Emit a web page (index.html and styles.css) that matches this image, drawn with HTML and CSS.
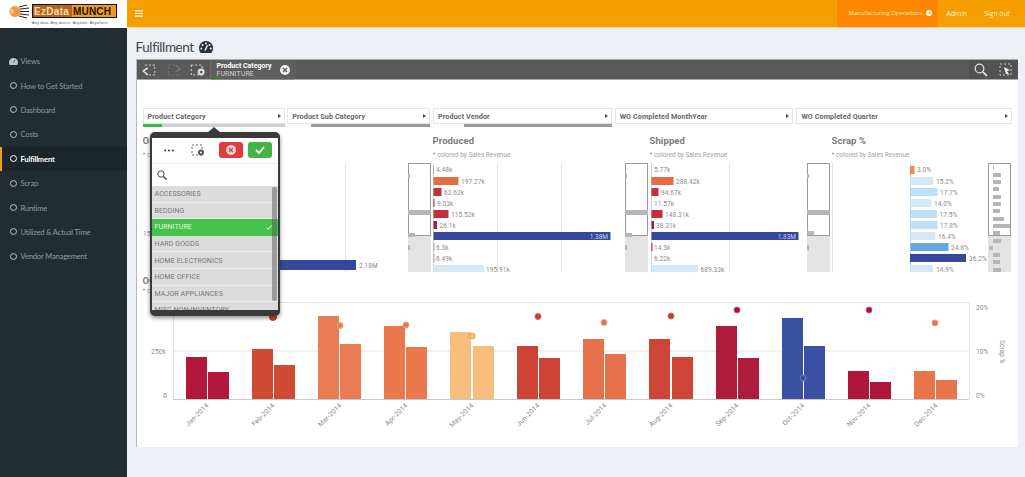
FILE: index.html
```html
<!DOCTYPE html>
<html lang="en">
<head>
<meta charset="utf-8">
<title>Fulfillment</title>
<link rel="stylesheet" href="styles.css">
</head>
<body>
<div class="app">
  <a class="logo" href="#">
    <svg width="127" height="28" viewBox="0 0 127 28">
      <circle cx="15" cy="11.500" r="5.500" fill="#f29a3e"/>
      <circle cx="11.500" cy="11.500" r="2.500" fill="#f7c084"/>
      <g stroke="#222" stroke-width="1"><path d="M19 7 L27 5M20 9 L29 8M20 11.500 L29 11.500M20 14 L29 15M19 16 L27 18"/></g>
      <rect x="32" y="4" width="85" height="14" fill="#1a120a"/>
      <rect x="33" y="5" width="39" height="12" fill="#b5651a"/>
      <rect x="72" y="5" width="44" height="12" fill="#f09a22"/>
      <text class="logo-a" x="34" y="15">EzData</text>
      <text class="logo-b" x="73" y="15">MUNCH</text>
      <text class="logo-c" x="32" y="24">Any data. Any device. Anytime. Anywhere</text>
    </svg>
  </a>
  <header class="topbar">
    <svg class="burger" width="8" height="7" viewBox="0 0 8 7"><path d="M0 0.8H8M0 3.500H8M0 6.200H8" stroke="#fff" stroke-width="1.200"/></svg>
    <nav class="topnav">
      <a class="topitem active" href="#">Manufacturing Operations
        <svg width="6" height="6" viewBox="0 0 6 6"><circle cx="3" cy="3" r="3" fill="#fff"/><path d="M1.500 3H4.500M3.200 1.800L4.500 3L3.200 4.200" stroke="#ff8700" stroke-width=".8" fill="none"/></svg>
      </a>
      <a class="topitem big" href="#">Admin</a>
      <a class="topitem big" href="#">Sign out</a>
    </nav>
  </header>
  <aside class="sidebar">
    <ul class="menu">
      <li class="menu-item"><svg class="ico" width="9" height="7" viewBox="0 0 18 14"><path d="M9 0a9 9 0 0 0-9 9c0 2 .6 3.700 1.600 5h14.800c1-1.300 1.600-3 1.600-5a9 9 0 0 0-9-9z" fill="#b8c7ce"/><path d="M9 9L12 4" stroke="#222d32" stroke-width="1.500"/></svg>Views</li>
      <li class="menu-item"><span class="ring"></span>How to Get Started</li>
      <li class="menu-item"><span class="ring"></span>Dashboard</li>
      <li class="menu-item"><span class="ring"></span>Costs</li>
      <li class="menu-item current"><span class="ring"></span>Fulfillment</li>
      <li class="menu-item"><span class="ring"></span>Scrap</li>
      <li class="menu-item"><span class="ring"></span>Runtime</li>
      <li class="menu-item"><span class="ring"></span>Utilized &amp; Actual Time</li>
      <li class="menu-item"><span class="ring"></span>Vendor Management</li>
    </ul>
  </aside>
  <main class="content">
    <h1 class="page-title">Fulfillment
      <svg width="14" height="12" viewBox="0 0 28 24"><path d="M14 0C6.300 0 0 6.300 0 14c0 3.800 1.300 7.300 3.500 10h21c2.200-2.700 3.500-6.200 3.500-10C28 6.300 21.700 0 14 0z" fill="#2b3238"/><circle cx="14" cy="5" r="2" fill="#ecf0f5"/><circle cx="7" cy="8" r="2" fill="#ecf0f5"/><circle cx="21" cy="8" r="2" fill="#ecf0f5"/><circle cx="4.500" cy="15" r="2" fill="#ecf0f5"/><circle cx="23.500" cy="15" r="2" fill="#ecf0f5"/><path d="M12 19L17 8.500" stroke="#ecf0f5" stroke-width="3"/></svg>
    </h1>
    <section class="panel">
      <div class="toolbar">
        <div class="tools">
          <svg width="74" height="20" viewBox="0 0 74 20">
            <g class="dash"><path d="M8 5H18V15H12"/></g>
            <path d="M6 11L11 15M6 11L11 8" stroke="#ddd" stroke-width="1.600" fill="none"/>
            <g class="dash dim"><path d="M42 15H32V5H38"/></g>
            <path d="M44 9L39 5M44 9L39 12" stroke="#777" stroke-width="1.500" fill="none"/>
            <g class="dash"><path d="M55 5H66V15H55Z"/></g>
            <circle cx="65" cy="12" r="3.500" fill="#ddd"/><circle cx="65" cy="12" r="1.300" fill="#595959"/>
          </svg>
        </div>
        <div class="chip">
          <div class="chip-text"><b>Product Category</b><span>FURNITURE</span></div>
          <svg class="chip-x" width="10" height="10" viewBox="0 0 10 10"><circle cx="5" cy="5" r="5" fill="#eee"/><path d="M3 3L7 7M7 3L3 7" stroke="#555" stroke-width="1.200"/></svg>
          <i class="chip-track"></i>
          <i class="chip-bar"></i>
        </div>
        <div class="tools-right">
          <svg width="14" height="14" viewBox="0 0 14 14"><circle cx="5.500" cy="5.500" r="4.300" fill="none" stroke="#ddd" stroke-width="1.300"/><path d="M8.800 8.800L13 13" stroke="#ddd" stroke-width="1.800"/></svg>
          <svg width="13" height="13" viewBox="0 0 13 13"><path d="M1 1H12V12H1Z" fill="none" stroke="#ccc" stroke-dasharray="2 2"/><path d="M5 4L11 7L8 8L10 11H7L6 8Z" fill="#eee"/></svg>
        </div>
      </div>

      <div class="filters">
        <div class="filter">
          <div class="filter-box"><span>Product Category</span><i class="tri"></i></div>
          <div class="filter-bar"><i class="seg-green"></i><i class="seg-light"></i></div>
        </div>
        <div class="filter">
          <div class="filter-box"><span>Product Sub Category</span><i class="tri"></i></div>
          <div class="filter-bar"><i class="seg-none s1"></i><i class="seg-dark"></i></div>
        </div>
        <div class="filter">
          <div class="filter-box"><span>Product Vendor</span><i class="tri"></i></div>
          <div class="filter-bar"><i class="seg-none s2"></i><i class="seg-dark"></i></div>
        </div>
        <div class="filter">
          <div class="filter-box"><span>WO Completed MonthYear</span><i class="tri"></i></div>
          <div class="filter-bar"></div>
        </div>
        <div class="filter">
          <div class="filter-box"><span>WO Completed Quarter</span><i class="tri"></i></div>
          <div class="filter-bar"></div>
        </div>
      </div>

      <div class="charts">
        <div class="chart">
          <h2>Ordered</h2><p>* colored by Sales Revenue</p>
          <svg class="plot" width="288" height="109" viewBox="143 163 288 109">
            <path class="grid" d="M345.500 163V272"/>
            <text class="val" x="143" y="236">15</text>
            <rect class="blue" x="270" y="260" width="86" height="10"/>
            <text class="val" x="359" y="268">2.18M</text>
            <rect class="track" x="408" y="235" width="23" height="37"/>
            <rect class="win" x="408.500" y="163.500" width="22" height="72"/>
            <rect class="band" x="408" y="210" width="23" height="5"/>
            <rect class="band" x="408" y="233" width="7" height="4"/>
            <rect class="band" x="408" y="174" width="2" height="4"/>
            <rect class="band" x="408" y="245" width="2" height="5"/>
          </svg>
        </div>
        <div class="chart">
          <h2>Produced</h2><p>* colored by Sales Revenue</p>
          <svg class="plot" width="215" height="109" viewBox="433 163 215 109">
            <path class="grid" d="M497.500 163V272M561.500 163V272"/>
            <path class="axis" d="M433.500 163V272"/>
            <rect class="mid" x="433" y="166" width="1" height="8"/><text class="val" x="436" y="172">4.48k</text>
            <rect class="c-orange" x="433.500" y="177" width="25" height="8"/><text class="val" x="461" y="183.500">197.27k</text>
            <rect class="c-red" x="433.500" y="188" width="8" height="8"/><text class="val" x="444" y="194.500">62.62k</text>
            <rect class="c-wine" x="433.500" y="199" width="1" height="8"/><text class="val" x="437" y="205.500">9.03k</text>
            <rect class="c-red" x="433.500" y="210" width="15" height="8"/><text class="val" x="451" y="216.500">115.52k</text>
            <rect class="c-wine" x="433.500" y="221" width="3.500" height="8"/><text class="val" x="439.500" y="227.500">26.1k</text>
            <rect class="blue" x="433.500" y="232" width="177" height="8"/><text class="val-in" x="608" y="238.500" text-anchor="end">1.38M</text>
            <rect class="mid" x="433.500" y="243" width="1" height="8"/><text class="val" x="436" y="249.500">6.3k</text>
            <rect class="mid" x="433.500" y="254" width="1" height="8"/><text class="val" x="436" y="260.500">6.49k</text>
            <rect class="c-pale" x="433.500" y="265" width="50.500" height="8"/><text class="val" x="486" y="271.500">195.91k</text>
            <rect class="track" x="625" y="235" width="23" height="37"/>
            <rect class="win" x="625.500" y="163.500" width="22" height="72"/>
            <rect class="band" x="625" y="210" width="23" height="5"/>
            <rect class="band" x="625" y="233" width="7" height="4"/>
            <rect class="band" x="625" y="174" width="2" height="4"/>
            <rect class="band" x="625" y="245" width="2" height="5"/>
          </svg>
        </div>
        <div class="chart">
          <h2>Shipped</h2><p>* colored by Sales Revenue</p>
          <svg class="plot" width="180" height="109" viewBox="650 163 180 109">
            <path class="grid" d="M729.500 163V272"/>
            <path class="axis" d="M651.500 163V272"/>
            <text class="val" x="654" y="172">5.77k</text>
            <rect class="c-orange" x="651.500" y="177" width="22" height="8"/><text class="val" x="676" y="183.500">288.42k</text>
            <rect class="c-red" x="651.500" y="188" width="7" height="8"/><text class="val" x="661" y="194.500">94.67k</text>
            <text class="val" x="654" y="205.500">11.57k</text>
            <rect class="c-red" x="651.500" y="210" width="11" height="8"/><text class="val" x="665" y="216.500">148.31k</text>
            <rect class="c-wine" x="651.500" y="221" width="2.500" height="8"/><text class="val" x="656" y="227.500">38.31k</text>
            <rect class="blue" x="651.500" y="232" width="147" height="8"/><text class="val-in" x="796" y="238.500" text-anchor="end">1.83M</text>
            <rect class="c-wine" x="651.500" y="243" width="1" height="8"/><text class="val" x="654" y="249.500">14.3k</text>
            <text class="val" x="654" y="260.500">6.22k</text>
            <rect class="c-pale" x="651.500" y="265" width="46.500" height="8"/><text class="val" x="700.500" y="271.500">689.33k</text>
            <rect class="track" x="807" y="235" width="23" height="37"/>
            <rect class="win" x="807.500" y="163.500" width="22" height="72"/>
            <rect class="band" x="807" y="210" width="23" height="5"/>
            <rect class="band" x="807" y="231" width="7" height="4"/>
            <rect class="band" x="807" y="174" width="2" height="4"/>
            <rect class="band" x="807" y="245" width="2" height="5"/>
          </svg>
        </div>
        <div class="chart">
          <h2>Scrap %</h2><p>* colored by Sales Revenue</p>
          <svg class="plot" width="179" height="109" viewBox="832 163 179 109">
            <path class="grid" d="M832.500 163V272"/>
            <path class="axis" d="M910.500 163V272"/>
            <rect class="c-lorange" x="910" y="166" width="4.500" height="8"/><text class="val" x="917" y="172">3.0%</text>
            <rect class="c-pale" x="910.500" y="177" width="23" height="8"/><text class="val" x="936" y="183.500">15.2%</text>
            <rect class="c-sky" x="910.500" y="188" width="27" height="8"/><text class="val" x="940" y="194.500">17.7%</text>
            <rect class="c-pale" x="910.500" y="199" width="21" height="8"/><text class="val" x="934" y="205.500">14.0%</text>
            <rect class="c-sky" x="910.500" y="210" width="26.500" height="8"/><text class="val" x="939.500" y="216.500">17.5%</text>
            <rect class="c-sky" x="910.500" y="221" width="27" height="8"/><text class="val" x="940" y="227.500">17.8%</text>
            <rect class="c-pale" x="910.500" y="232" width="25" height="8"/><text class="val" x="938" y="238.500">16.4%</text>
            <rect class="c-mid" x="910.500" y="243" width="38" height="8"/><text class="val" x="951" y="249.500">24.8%</text>
            <rect class="blue" x="910" y="254" width="56" height="8"/><text class="val" x="969" y="260.500">36.2%</text>
            <rect class="c-pale" x="910.500" y="265" width="22.500" height="8"/><text class="val" x="936" y="271.500">14.9%</text>
            <rect class="track" x="988" y="235" width="23" height="37"/>
            <rect class="win" x="988.500" y="163.500" width="22" height="72"/>
            <g class="band">
              <rect x="993" y="166" width="1" height="4"/><rect x="993" y="173" width="8" height="4"/>
              <rect x="993" y="180" width="8" height="4"/><rect x="993" y="187" width="6" height="4"/>
              <rect x="993" y="195" width="8" height="4"/><rect x="993" y="202" width="8" height="4"/>
              <rect x="993" y="209" width="7" height="4"/><rect x="993" y="217" width="11" height="4"/>
              <rect x="993" y="224" width="17" height="4"/><rect x="993" y="231" width="7" height="4"/>
              <rect x="993" y="239" width="8" height="4"/><rect x="989" y="246" width="4" height="4"/>
              <rect x="993" y="253" width="7" height="4"/><rect x="993" y="260" width="7" height="4"/>
              <rect x="993" y="268" width="8" height="4"/>
            </g>
          </svg>
        </div>
      </div>

      <div class="combo">
        <h2>Output by Month</h2><p>* colored by Sales Revenue</p>
        <svg class="combo-plot" width="882" height="140" viewBox="136 298 882 140">
          <path class="grid" d="M172 302.500H968M172 351H968M172.500 302V399M968.500 302V399"/>
          <text class="val" x="165" y="354" text-anchor="end">250k</text>
          <text class="val" x="166" y="398" text-anchor="end">0</text>
          <text class="val" x="975" y="310">20%</text>
          <text class="val" x="975" y="354">10%</text>
          <text class="val" x="975" y="398">0%</text>
          <text class="val rot" x="999" y="340" transform="rotate(90 999 340)">Scrap %</text>
          <g fill="#b0173a"><rect x="185" y="357" width="21" height="42"/><rect x="207" y="372" width="21" height="27"/></g>
          <g fill="#d04a33"><rect x="251" y="349" width="21" height="50"/><rect x="273" y="365" width="21" height="34"/></g>
          <g fill="#e97c52"><rect x="317" y="316" width="21" height="83"/><rect x="339" y="344" width="21" height="55"/></g>
          <g fill="#e9784d"><rect x="383" y="326" width="21" height="73"/><rect x="405" y="347" width="21" height="52"/></g>
          <g fill="#f6bd7c"><rect x="449" y="332" width="21" height="67"/><rect x="472" y="346" width="21" height="53"/></g>
          <g fill="#cf4336"><rect x="516" y="346" width="21" height="53"/><rect x="538" y="358" width="21" height="41"/></g>
          <g fill="#e5704a"><rect x="582" y="339" width="21" height="60"/><rect x="604" y="354" width="21" height="45"/></g>
          <g fill="#ce4538"><rect x="648" y="339" width="21" height="60"/><rect x="671" y="357" width="21" height="42"/></g>
          <g fill="#af1b3b"><rect x="715" y="326" width="21" height="73"/><rect x="737" y="358" width="21" height="41"/></g>
          <g fill="#3a50a0"><rect x="781" y="318" width="21" height="81"/><rect x="803" y="346" width="21" height="53"/></g>
          <g fill="#ae173a"><rect x="847" y="371" width="21" height="28"/><rect x="869" y="382" width="21" height="17"/></g>
          <g fill="#e7744b"><rect x="913" y="371" width="21" height="28"/><rect x="935" y="380" width="21" height="19"/></g>
          <path class="base" d="M172 399.500H968"/>
          <g class="dots">
            <circle cx="272" cy="317" r="3.500" fill="#cb4a3c" stroke="#c0392f"/>
            <circle cx="339" cy="325.500" r="3" fill="#e97c52" stroke="#f0a080"/>
            <circle cx="405" cy="325" r="3" fill="#e9784d" stroke="#f0a080"/>
            <circle cx="471" cy="336" r="3" fill="#f6bd7c" stroke="#e9a04c"/>
            <circle cx="537" cy="316.500" r="3" fill="#c8372f" stroke="#d66a5f"/>
            <circle cx="603" cy="322.500" r="3" fill="#e5704a" stroke="#ef9f85"/>
            <circle cx="670" cy="316" r="3" fill="#c8372f" stroke="#d66a5f"/>
            <circle cx="736" cy="310" r="3" fill="#a9123a" stroke="#cc5a74"/>
            <circle cx="802" cy="378" r="3" fill="#3a50a0" stroke="#6a7cc0"/>
            <circle cx="868" cy="310" r="3" fill="#a9123a" stroke="#cc5a74"/>
            <circle cx="934" cy="323" r="3" fill="#e7744b" stroke="#f0a080"/>
          </g>
          <g class="xl" text-anchor="end">
            <text x="208" y="406" transform="rotate(-45 208 406)">Jan-2014</text>
            <text x="274" y="406" transform="rotate(-45 274 406)">Feb-2014</text>
            <text x="341" y="406" transform="rotate(-45 341 406)">Mar-2014</text>
            <text x="407" y="406" transform="rotate(-45 407 406)">Apr-2014</text>
            <text x="473" y="406" transform="rotate(-45 473 406)">May-2014</text>
            <text x="539" y="406" transform="rotate(-45 539 406)">Jun-2014</text>
            <text x="606" y="406" transform="rotate(-45 606 406)">Jul-2014</text>
            <text x="672" y="406" transform="rotate(-45 672 406)">Aug-2014</text>
            <text x="738" y="406" transform="rotate(-45 738 406)">Sep-2014</text>
            <text x="804" y="406" transform="rotate(-45 804 406)">Oct-2014</text>
            <text x="870" y="406" transform="rotate(-45 870 406)">Nov-2014</text>
            <text x="937" y="406" transform="rotate(-45 937 406)">Dec-2014</text>
          </g>
        </svg>
      </div>

      <div class="popover">
        <div class="pop-head">
          <svg class="pop-more" width="10" height="3" viewBox="0 0 10 3"><circle cx="1.200" cy="1.500" r="1.100" fill="#444"/><circle cx="5" cy="1.500" r="1.100" fill="#444"/><circle cx="8.800" cy="1.500" r="1.100" fill="#444"/></svg>
          <svg class="pop-clear" width="13" height="12" viewBox="0 0 13 12"><path d="M1 1H11V11H1Z" fill="none" stroke="#666" stroke-dasharray="2 2"/><circle cx="10" cy="8.500" r="3" fill="#555"/><circle cx="10" cy="8.500" r="1" fill="#fff"/></svg>
          <button class="btn red" type="button"><svg width="10" height="10" viewBox="0 0 10 10"><circle cx="5" cy="5" r="5" fill="#f4d5d5"/><path d="M3 3L7 7M7 3L3 7" stroke="#e04040" stroke-width="1.300"/></svg></button>
          <button class="btn green" type="button"><svg width="10" height="8" viewBox="0 0 10 8"><path d="M1 4L4 7L9 1" fill="none" stroke="#fff" stroke-width="1.800"/></svg></button>
        </div>
        <div class="pop-search"><svg width="10" height="10" viewBox="0 0 10 10"><circle cx="4" cy="4" r="3.200" fill="none" stroke="#444" stroke-width="1"/><path d="M6.500 6.500L9.500 9.500" stroke="#444" stroke-width="1.400"/></svg></div>
        <ul class="pop-list">
          <li>ACCESSORIES</li>
          <li>BEDDING</li>
          <li class="sel">FURNITURE<svg width="6" height="5" viewBox="0 0 6 5"><path d="M.5 2.500L2.300 4.300L5.500 .5" fill="none" stroke="#fff" stroke-width="1"/></svg></li>
          <li>HARD GOODS</li>
          <li>HOME ELECTRONICS</li>
          <li>HOME OFFICE</li>
          <li>MAJOR APPLIANCES</li>
          <li>MISC NON-INVENTORY</li>
        </ul>
        <i class="pop-scroll"></i>
      </div>
    </section>
  </main>
</div>
</body>
</html>
```
FILE: styles.css
```css
* { box-sizing: border-box; }
html, body { margin: 0; height: 100%; overflow: hidden; }
body { font-family: "Roboto", "Liberation Sans", sans-serif; background: #ecf0f5; color: #666; }

.app { display: grid; grid-template-columns: 127px 1fr; grid-template-rows: 28px 1fr; height: 477px; }

.logo { background: #fff; display: block; height: 28px; }
.logo svg { display: block; }
.logo-a, .logo-b { font: 700 10px "Liberation Sans", sans-serif; }
.logo-a { fill: #f6dcae; letter-spacing: .3px; }
.logo-b { fill: #17110a; letter-spacing: .2px; }
.logo-c { font: 3.700px "Liberation Sans", sans-serif; fill: #555; letter-spacing: .2px; }

.topbar { background: #f59e00; display: flex; align-items: center; padding-left: 8px; justify-content: space-between; border-bottom: 1px solid #fbd9a0; }
.burger { display: block; margin-top: -1px; }
.topnav { display: flex; height: 100%; padding-right: 15px; }
.topitem { color: #fde8c4; text-decoration: none; font: 400 6px "Open Sans", sans-serif; display: flex; align-items: center; gap: 3px; padding-bottom: 1px; height: 100%; white-space: nowrap; }
.topitem.active { background: #ff8700; padding-left: 12px; width: 101px; margin-right: 9px; }
.topitem.big { font-size: 6.800px; color: #fff2dc; }
.topitem.big + .topitem.big { margin-left: 17px; }

.sidebar { background: #222d32; padding-top: 21px; }
.menu { list-style: none; margin: 0; padding: 0; }
.menu-item { height: 24.400px; display: flex; align-items: center; gap: 4px; padding-left: 7.500px; font: 400 7.600px "Lato", sans-serif; letter-spacing: -.18px; color: #8b9aa0; white-space: nowrap; border-left: 2px solid transparent; }
.menu-item.current { background: #1c2529; color: #fff; font-weight: 700; border-left-color: #e8a020; }
.ring { width: 7px; height: 7px; border: 1.200px solid #b8c7ce; border-radius: 50%; flex: none; }
.current .ring { border-color: #fff; }
.ico { flex: none; margin-right: -1px; margin-left: -1px; }

.content { padding: 8px 7px 30px 8.500px; min-width: 0; }
.page-title { margin: 0 0 1px; font: 400 13.500px/22px "Lato", sans-serif; letter-spacing: -.4px; color: #444; display: flex; align-items: center; gap: 5px; }

.panel { position: relative; height: 388px; background: #fff; border-left: 1.500px solid #b3b7bf; }

.toolbar { height: 21px; background: #595959; border-top: 1px solid #a8a8a8; border-bottom: 1px solid #aaa; display: flex; align-items: stretch; }
.tools { width: 74px; display: flex; align-items: center; border-right: 1px solid #6b6b6b; }
.tools svg { display: block; }
.dash path { fill: none; stroke: #ddd; stroke-width: 1; stroke-dasharray: 2 2; }
.dash.dim path { stroke: #777; }
.chip { position: relative; width: 85px; display: flex; align-items: center; justify-content: space-between; padding: 0 6px; background: #5e5e5e; }
.chip-text { display: flex; flex-direction: column; color: #fff; font-size: 7px; line-height: 8px; white-space: nowrap; }
.chip-text b { font-weight: 700; }
.chip-text span { color: #d0d0d0; letter-spacing: .1px; }
.chip-x { flex: none; }
.chip-track { position: absolute; left: 0; right: 2px; bottom: -1px; height: 1px; background: #8a8a8a; }
.chip-bar { position: absolute; left: 0; bottom: -1px; width: 11px; height: 1px; background: #46c04a; }
.tools-right { margin-left: auto; width: 49px; background: #525252; display: flex; align-items: center; justify-content: space-between; padding: 0 6px 0 5px; }

.filters { display: flex; gap: 2px; margin: 28px 6px 0 6px; }
.filter:nth-child(1), .filter:nth-child(2) { width: 143px; }
.filter:nth-child(3), .filter:nth-child(4) { width: 179px; margin-left: 1px; }
.filter:nth-child(5) { width: 216px; margin-left: 1px; }
.filter-box { height: 16px; border: 1px solid #e6e6e6; display: flex; align-items: center; justify-content: space-between; padding: 0 3px 0 4px; font-size: 7.200px; font-weight: 700; color: #666; white-space: nowrap; letter-spacing: .1px; }
.tri { width: 0; height: 0; border-left: 3.500px solid #444; border-top: 2.500px solid transparent; border-bottom: 2.500px solid transparent; }
.filter-bar { height: 3px; display: flex; }
.filter-bar i { display: block; height: 100%; }
.seg-green { width: 19px; background: #3fb54a; }
.seg-light { flex: 1; background: #d0d0d0; }
.seg-dark { flex: 1; background: #999; }
.seg-none.s1 { width: 24px; }
.seg-none.s2 { width: 31px; }

.charts { display: grid; grid-template-columns: 288px 215px 180px 179px; column-gap: 2px; margin: 7px 0 0 6px; height: 141px; }
.chart { min-width: 0; overflow: hidden; }
.chart h2, .combo h2 { margin: 0; font-size: 9.500px; line-height: 13px; font-weight: 700; color: #7b7b7b; letter-spacing: .1px; white-space: nowrap; }
.chart p, .combo p { margin: 0; font-size: 6.500px; color: #a0a0a0; white-space: nowrap; }
.chart p { height: 16px; line-height: 17px; }
.plot { display: block; overflow: hidden; }

.val { font-size: 6.500px; fill: #8a8a8a; letter-spacing: .1px; }
.val-in { font-size: 6.500px; fill: #c8d0ea; }
.rot { opacity: .99; }
.grid { stroke: #e4e4e4; stroke-width: 1; fill: none; }
.axis { stroke: #cfcfcf; stroke-width: 1; fill: none; }
.base { stroke: #c8c8c8; stroke-width: 1; fill: none; }
.blue { fill: #35489b; }
.mid { fill: #b0a8a8; }
.c-orange { fill: #e56c44; }
.c-lorange { fill: #ea8a58; }
.c-red { fill: #c52e3c; }
.c-wine { fill: #a91c3e; }
.c-pale { fill: #d3e9f8; }
.c-sky { fill: #bde0f7; }
.c-mid { fill: #63a9de; }
.track { fill: #e3e3e3; }
.win { fill: #fff; stroke: #9a9a9a; stroke-width: 1; }
.band { fill: #b5b5b5; }

.combo { padding-left: 6px; }
.combo h2 { line-height: 11px; }
.combo p { height: 12px; line-height: 10px; }
.combo-plot { display: block; margin-left: -6px; }
.xl { font-size: 6.800px; fill: #8a8a8a; letter-spacing: .1px; opacity: .99; }

.popover { position: absolute; left: 13px; top: 73px; width: 130px; height: 184px; background: #3a3a3a; border-radius: 5px; padding: 6px 2px; box-shadow: 0 2px 4px rgba(0,0,0,.45); }
.popover::before { content: ""; position: absolute; left: 57px; top: -5px; border-left: 7px solid transparent; border-right: 7px solid transparent; border-bottom: 6px solid #3a3a3a; }
.pop-head { height: 26px; background: #fff; display: flex; align-items: center; border-bottom: 1px solid #eee; padding-bottom: 1px; }
.pop-more { margin-left: 12px; margin-right: 17px; display: block; }
.pop-clear { margin-right: 15px; }
.btn { width: 24px; height: 16px; border: 0; border-radius: 3px; padding: 0; display: flex; align-items: center; justify-content: center; }
.btn.red { background: #e03c3c; margin-right: 5px; }
.btn.green { background: #46b348; }
.pop-search { height: 22px; background: #fff; display: flex; align-items: center; padding-left: 5px; }
.pop-list { list-style: none; margin: 0; padding: 0; height: 124px; overflow: hidden; background: #fff; }
.pop-list li { height: 16.600px; background: #dcdcdc; border-bottom: 1px solid #eaeaea; font-size: 7px; color: #777; padding: 1px 6px 0 3px; display: flex; align-items: center; justify-content: space-between; letter-spacing: .1px; }
.pop-list li.sel { background: #45c24a; color: #e8f8e8; border-bottom-color: #45c24a; }
.pop-scroll { position: absolute; right: 3px; top: 55px; width: 5px; height: 114px; background: rgba(90,90,90,.5); border-radius: 2px; }
```
